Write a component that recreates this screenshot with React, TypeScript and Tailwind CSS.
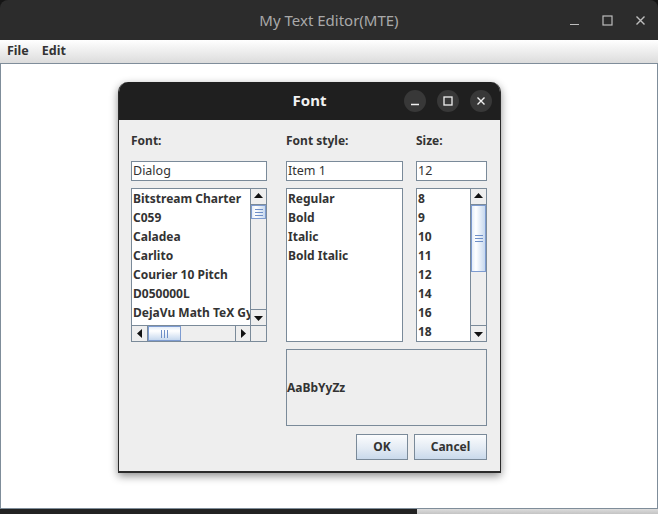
import React from "react";

const FONT = "font-['Noto_Sans','Open_Sans','DejaVu_Sans',sans-serif]";

function Up() {
  return (
    <svg width="9" height="5" viewBox="0 0 9 5">
      <path d="M0 5 L4.5 0 L9 5 Z" fill="#111" />
    </svg>
  );
}
function Down() {
  return (
    <svg width="9" height="5" viewBox="0 0 9 5">
      <path d="M0 0 L4.5 5 L9 0 Z" fill="#111" />
    </svg>
  );
}
function Left() {
  return (
    <svg width="5" height="9" viewBox="0 0 5 9">
      <path d="M5 0 L0 4.5 L5 9 Z" fill="#111" />
    </svg>
  );
}
function Right() {
  return (
    <svg width="5" height="9" viewBox="0 0 5 9">
      <path d="M0 0 L5 4.5 L0 9 Z" fill="#111" />
    </svg>
  );
}

function VScroll({ thumbClass }: { thumbClass: string }) {
  return (
    <div className="flex w-[16px] shrink-0 flex-col border-l border-[#7a8a99] bg-[#eeeeee]">
      <div className="flex h-[16px] shrink-0 items-center justify-center border-b border-[#7a8a99] bg-[#eeeeee] pb-[2px]">
        <Up />
      </div>
      <div className="flex flex-1 flex-col">
        <div
          className={`flex shrink-0 flex-col items-center justify-center gap-[2px] border border-[#7d9bd0] bg-[linear-gradient(to_right,#e4edf8,#ffffff_30%,#c6d8ee)] ${thumbClass}`}
        >
          <div className="h-px w-[8px] bg-[#6e8fc8]" />
          <div className="h-px w-[8px] bg-[#6e8fc8]" />
          <div className="h-px w-[8px] bg-[#6e8fc8]" />
        </div>
      </div>
      <div className="flex h-[16px] shrink-0 items-center justify-center border-t border-[#7a8a99] bg-[#eeeeee] pt-[1px]">
        <Down />
      </div>
    </div>
  );
}

function HScroll() {
  return (
    <div className="flex h-[16px] shrink-0 border-t border-[#7a8a99] bg-[#eeeeee]">
      <div className="flex w-[16px] shrink-0 items-center justify-center border-r border-[#7a8a99]">
        <Left />
      </div>
      <div className="flex w-[33px] shrink-0 items-center justify-center gap-[2px] border border-[#7d9bd0] bg-[linear-gradient(to_bottom,#e4edf8,#ffffff_30%,#c6d8ee)]">
        <div className="h-[8px] w-px bg-[#6e8fc8]" />
        <div className="h-[8px] w-px bg-[#6e8fc8]" />
        <div className="h-[8px] w-px bg-[#6e8fc8]" />
      </div>
      <div className="flex-1" />
      <div className="flex w-[16px] shrink-0 items-center justify-center border-x border-[#7a8a99]">
        <Right />
      </div>
      <div className="w-[15px] shrink-0" />
    </div>
  );
}

const fonts = [
  "Bitstream Charter",
  "C059",
  "Caladea",
  "Carlito",
  "Courier 10 Pitch",
  "D050000L",
  "DejaVu Math TeX Gyre",
];
const styles = ["Regular", "Bold", "Italic", "Bold Italic"];
const sizes = ["8", "9", "10", "11", "12", "14", "16", "18"];

function Item({ text }: { text: string }) {
  return (
    <div className="h-[19px] shrink-0 whitespace-nowrap text-[12px] font-bold leading-[19px] text-[#333333]">
      {text}
    </div>
  );
}

function Field({ value, w }: { value: string; w: string }) {
  return (
    <div
      className={`flex h-[20px] items-center border border-[#7a8a99] bg-white pl-[1px] text-[12.5px] text-[#333333] ${w}`}
    >
      {value}
    </div>
  );
}

function Label({ text }: { text: string }) {
  return (
    <div className="h-[14px] text-[12px] font-bold leading-[14px] text-[#333333]">{text}</div>
  );
}

function Btn({ text, w }: { text: string; w: string }) {
  return (
    <div
      className={`flex h-[26px] items-center justify-center border border-[#7a8a99] bg-[linear-gradient(to_bottom,#fbfcfd,#e3ebf4_55%,#c9d9eb)] text-[12px] font-bold text-[#333333] ${w}`}
    >
      {text}
    </div>
  );
}

function Circle({ children }: { children: React.ReactNode }) {
  return (
    <div className="flex h-[22px] w-[22px] items-center justify-center rounded-full bg-[#383838]">
      {children}
    </div>
  );
}

export default function App() {
  return (
    <div className={`relative h-[514px] w-[658px] overflow-hidden bg-[#151515] ${FONT}`}>
      <div className="flex h-[509px] flex-col overflow-hidden rounded-t-[8px] bg-[#2c2c2c]">
        {/* title bar */}
        <div className="relative flex h-[40px] shrink-0 items-center justify-center">
          <span className="text-[15px] text-[#a9a9a9]">My Text Editor(MTE)</span>
          <div className="absolute right-[12px] top-0 flex h-full items-center gap-[22px] text-[#bdbdbd]">
            <svg width="11" height="11" viewBox="0 0 11 11">
              <path d="M1 9.5 H10" stroke="#bdbdbd" strokeWidth="1.2" />
            </svg>
            <svg width="11" height="11" viewBox="0 0 11 11">
              <rect x="1" y="1" width="9" height="9" fill="none" stroke="#bdbdbd" strokeWidth="1.2" />
            </svg>
            <svg width="11" height="11" viewBox="0 0 11 11">
              <path d="M1.5 1.5 L9.5 9.5 M9.5 1.5 L1.5 9.5" stroke="#bdbdbd" strokeWidth="1.4" />
            </svg>
          </div>
        </div>
        {/* menu bar */}
        <div className="flex h-[23px] shrink-0 items-center gap-[13px] bg-[linear-gradient(to_bottom,#ffffff,#dcdcdc)] pl-[7px] text-[12.5px] font-bold text-[#333333]">
          <span>File</span>
          <span>Edit</span>
        </div>
        {/* content */}
        <div className="flex-1 border border-[#7f8d9a] bg-white" />
      </div>
      {/* bottom desktop strip */}
      <div className="flex h-[5px]">
        <div className="w-[417px] bg-[#222222]" />
        <div className="flex-1 bg-[linear-gradient(to_bottom,#dcdcdc,#c4c4c4)]" />
      </div>

      {/* Font dialog */}
      <div className="absolute left-[118px] top-[82px] flex h-[391px] w-[383px] flex-col overflow-hidden rounded-t-[10px] border-b-2 border-x border-[#2a2a2a] bg-[#eeeeee] shadow-[0_3px_8px_rgba(0,0,0,0.45)]">
        <div className="relative flex h-[38px] shrink-0 items-center justify-center bg-[#1f1f1f]">
          <span className="-mt-[2px] text-[15px] font-bold text-[#f2f2f2]">Font</span>
          <div className="absolute right-[8px] top-0 flex h-full items-center gap-[11px]">
            <Circle>
              <svg width="10" height="10" viewBox="0 0 10 10">
                <path d="M1 8.5 H9" stroke="#f0f0f0" strokeWidth="1.4" />
              </svg>
            </Circle>
            <Circle>
              <svg width="10" height="10" viewBox="0 0 10 10">
                <rect x="1" y="1" width="8" height="8" fill="none" stroke="#f0f0f0" strokeWidth="1.3" />
              </svg>
            </Circle>
            <Circle>
              <svg width="10" height="10" viewBox="0 0 10 10">
                <path d="M1.5 1.5 L8.5 8.5 M8.5 1.5 L1.5 8.5" stroke="#f0f0f0" strokeWidth="1.4" />
              </svg>
            </Circle>
          </div>
        </div>
        <div className="flex flex-col pl-[12px] pt-[14px]">
          <div className="flex">
            {/* font column */}
            <div className="flex w-[136px] flex-col">
              <Label text="Font:" />
              <div className="mt-[13px]">
                <Field value="Dialog" w="w-[136px]" />
              </div>
              <div className="mt-[7px] flex h-[154px] flex-col border border-[#7a8a99] bg-white">
                <div className="flex flex-1">
                  <div className="flex flex-1 flex-col overflow-hidden pl-[1px]">
                    {fonts.map((f) => (
                      <Item key={f} text={f} />
                    ))}
                  </div>
                  <VScroll thumbClass="h-[14px]" />
                </div>
                <HScroll />
              </div>
            </div>
            {/* style column */}
            <div className="ml-[19px] flex w-[117px] flex-col">
              <Label text="Font style:" />
              <div className="mt-[13px]">
                <Field value="Item 1" w="w-[117px]" />
              </div>
              <div className="mt-[7px] flex h-[154px] flex-col border border-[#7a8a99] bg-white pl-[1px]">
                {styles.map((s) => (
                  <Item key={s} text={s} />
                ))}
              </div>
            </div>
            {/* size column */}
            <div className="ml-[13px] flex w-[71px] flex-col">
              <Label text="Size:" />
              <div className="mt-[13px]">
                <Field value="12" w="w-[71px]" />
              </div>
              <div className="mt-[7px] flex h-[154px] border border-[#7a8a99] bg-white">
                <div className="flex flex-1 flex-col overflow-hidden pl-[1px]">
                  {sizes.map((s) => (
                    <Item key={s} text={s} />
                  ))}
                </div>
                <VScroll thumbClass="h-[67px]" />
              </div>
            </div>
          </div>
          <div className="ml-[155px] mt-[7px] flex w-[201px] flex-col">
            <div className="flex h-[77px] items-center border border-[#7a8a99] text-[12px] font-bold text-[#333333]">
              AaBbYyZz
            </div>
            <div className="mt-[8px] flex justify-end gap-[6px]">
              <Btn text="OK" w="w-[52px]" />
              <Btn text="Cancel" w="w-[73px]" />
            </div>
          </div>
        </div>
      </div>
    </div>
  );
}
